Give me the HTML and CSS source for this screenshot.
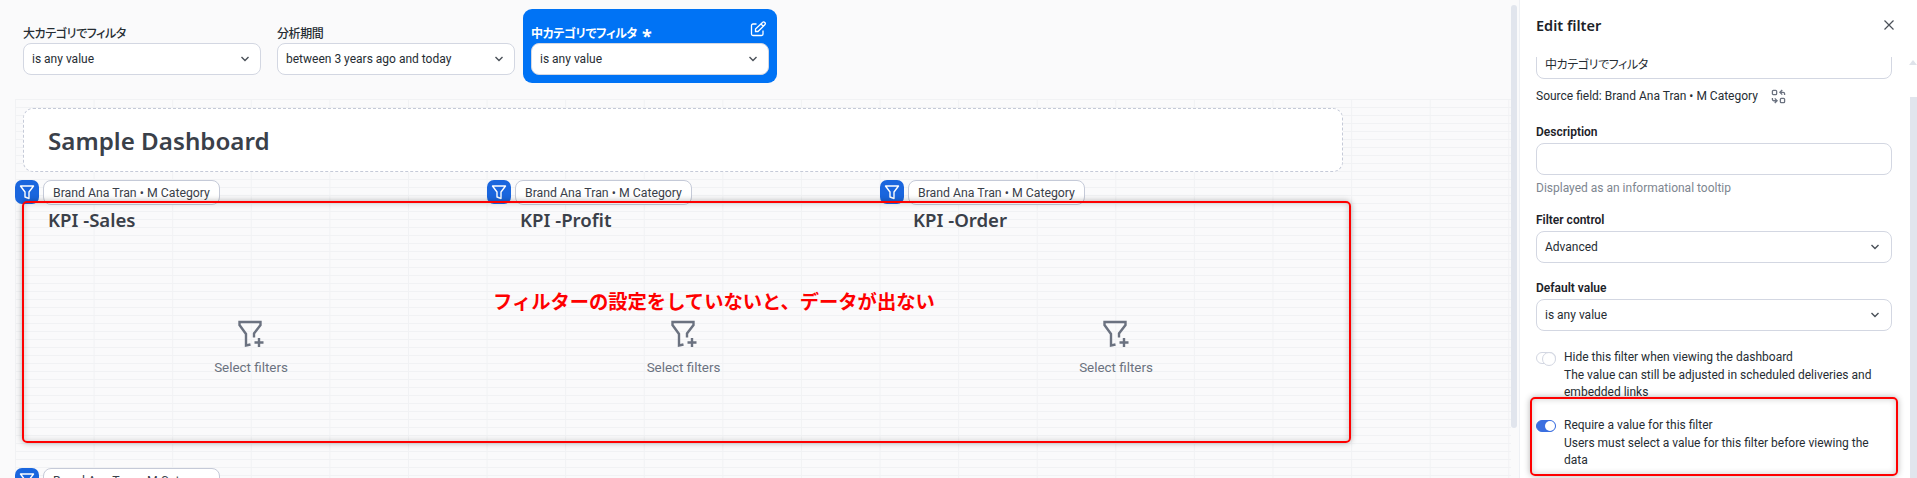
FILE: index.html
```html
<!DOCTYPE html>
<html lang="en">
<head>
    <meta charset="UTF-8">
    <meta name="viewport" content="width=device-width, initial-scale=1.0">
    <title>Sample Dashboard</title>
    <link rel="stylesheet" href="styles.css">
</head>
<body>
    <main class="dashboard">
        <!-- Filter bar -->
        <div class="filter-bar">
            <div class="filter">
                <div class="filter-label">大カテゴリでフィルタ</div>
                <div class="select">is any value<svg class="chevron" viewBox="0 0 10 6"><path d="M1.500 1l3.500 3.500L8.500 1"/></svg></div>
            </div>
            <div class="filter">
                <div class="filter-label">分析期間</div>
                <div class="select">between 3 years ago and today<svg class="chevron" viewBox="0 0 10 6"><path d="M1.500 1l3.500 3.500L8.500 1"/></svg></div>
            </div>
            <div class="filter filter-active">
                <div class="filter-label">
                    <span>中カテゴリでフィルタ<b class="required">*</b></span>
                    <svg class="edit-icon" viewBox="0 0 16 16"><path d="M6.500 3H3a1.500 1.500 0 0 0-1.500 1.500V13A1.500 1.500 0 0 0 3 14.500h8.500A1.500 1.500 0 0 0 13 13V9.500"/><path d="M5.500 10.500V8l7-6.500a1.400 1.400 0 0 1 2.300 2.300L8 10.500zM11 3l2.300 2.300"/></svg>
                </div>
                <div class="select">is any value<svg class="chevron" viewBox="0 0 10 6"><path d="M1.500 1l3.500 3.500L8.500 1"/></svg></div>
            </div>
        </div>

        <!-- Tile canvas -->
        <div class="canvas">
            <div class="title-tile"><h1>Sample Dashboard</h1></div>

            <div class="tile-row">
                <section class="tile tile-wide">
                    <div class="tile-filter">
                        <span class="badge"><svg viewBox="0 0 16 16"><path d="M1.500 2h13L10 8v6.500l-4-1.500V8z"/></svg></span>
                        <span class="chip">Brand Ana Tran • M Category</span>
                    </div>
                    <h2>KPI -Sales</h2>
                    <div class="empty">
                        <svg viewBox="0 0 26 28"><path d="M12.500 24.500L8 25.500V14L1.500 5V2h21v3L16 13.500V17.500"/><path d="M21 18v9M16.500 22.500h9"/></svg>
                        <p>Select filters</p>
                    </div>
                </section>
                <section class="tile tile-narrow">
                    <div class="tile-filter">
                        <span class="badge"><svg viewBox="0 0 16 16"><path d="M1.500 2h13L10 8v6.500l-4-1.500V8z"/></svg></span>
                        <span class="chip">Brand Ana Tran • M Category</span>
                    </div>
                    <h2>KPI -Profit</h2>
                    <div class="empty">
                        <svg viewBox="0 0 26 28"><path d="M12.500 24.500L8 25.500V14L1.500 5V2h21v3L16 13.500V17.500"/><path d="M21 18v9M16.500 22.500h9"/></svg>
                        <p>Select filters</p>
                    </div>
                </section>
                <section class="tile tile-wide">
                    <div class="tile-filter">
                        <span class="badge"><svg viewBox="0 0 16 16"><path d="M1.500 2h13L10 8v6.500l-4-1.500V8z"/></svg></span>
                        <span class="chip">Brand Ana Tran • M Category</span>
                    </div>
                    <h2>KPI -Order</h2>
                    <div class="empty">
                        <svg viewBox="0 0 26 28"><path d="M12.500 24.500L8 25.500V14L1.500 5V2h21v3L16 13.500V17.500"/><path d="M21 18v9M16.500 22.500h9"/></svg>
                        <p>Select filters</p>
                    </div>
                </section>
            </div>

            <div class="tile-filter">
                <span class="badge"><svg viewBox="0 0 16 16"><path d="M1.500 2h13L10 8v6.500l-4-1.500V8z"/></svg></span>
                <span class="chip">Brand Ana Tran • M Category</span>
            </div>
        </div>

        <!-- Red annotation drawn over the screenshot -->
        <div class="note-box note-tiles"></div>
        <div class="note-text">フィルターの設定をしていないと、データが出ない</div>
    </main>

    <div class="page-scrollbar"></div>

    <!-- Edit filter panel -->
    <aside class="panel">
        <header class="panel-header">
            <h3>Edit filter</h3>
            <svg class="close-icon" viewBox="0 0 12 12"><path d="M1.500 1.500l9 9M10.500 1.500l-9 9"/></svg>
        </header>
        <div class="panel-body">
            <div class="input input-cut">中カテゴリでフィルタ</div>
            <div class="source-row">
                <span>Source field: Brand Ana Tran • M Category</span>
                <svg class="swap-icon" viewBox="0 0 16 16"><rect x="1.500" y="1.500" width="4.500" height="4.500" rx="1"/><rect x="10" y="10" width="4.500" height="4.500" rx="1"/><path d="M9.500 3.500h3.500a1.500 1.500 0 0 1 1.500 1.500v1.500M12 1l-2.500 2.500L12 6"/><path d="M6.500 12.500H3A1.500 1.500 0 0 1 1.500 11V9.500M4 15l2.500-2.500L4 10"/></svg>
            </div>

            <div class="field-label label-description">Description</div>
            <div class="input"></div>
            <div class="hint">Displayed as an informational tooltip</div>

            <div class="field-label label-control">Filter control</div>
            <div class="input">Advanced<svg class="chevron" viewBox="0 0 10 6"><path d="M1.500 1l3.500 3.500L8.500 1"/></svg></div>

            <div class="field-label label-default">Default value</div>
            <div class="input">is any value<svg class="chevron" viewBox="0 0 10 6"><path d="M1.500 1l3.500 3.500L8.500 1"/></svg></div>

            <div class="toggle-row toggle-hide">
                <span class="toggle"></span>
                <div>
                    <div class="toggle-title">Hide this filter when viewing the dashboard</div>
                    <div class="toggle-text">The value can still be adjusted in scheduled deliveries and embedded links</div>
                </div>
            </div>
            <div class="toggle-row toggle-require">
                <span class="toggle toggle-on"></span>
                <div>
                    <div class="toggle-title">Require a value for this filter</div>
                    <div class="toggle-text">Users must select a value for this filter before viewing the data</div>
                </div>
            </div>
        </div>
        <div class="panel-scroll-arrow"></div>
        <div class="panel-scrollbar"></div>
    </aside>
    <div class="note-box note-panel"></div>
</body>
</html>
```

FILE: styles.css
```css
/* General Styles */
* {
    box-sizing: border-box;
}

html, body {
    height: 478px;
}

body {
    margin: 0;
    display: flex;
    overflow: hidden;
    font-family: Roboto, "Noto Sans CJK JP", sans-serif;
    font-size: 12px;
    color: #262d33;
    background-color: #fafafb;
}

.chevron {
    width: 10px;
    height: 6px;
    fill: none;
    stroke: #4a5058;
    stroke-width: 1.400;
    flex-shrink: 0;
}

/* Dashboard */
.dashboard {
    position: relative;
    width: 1511px;
    flex-shrink: 0;
}

.filter-bar {
    display: flex;
    align-items: flex-end;
    gap: 16px;
    height: 99px;
    padding: 9px 0 16px 23px;
}

.filter {
    width: 238px;
    margin-bottom: 8px;
}

.filter-label {
    height: 20px;
    font-family: "Noto Sans CJK JP", sans-serif;
    font-size: 12px;
    font-weight: 500;
    font-feature-settings: "palt";
    line-height: 20px;
    letter-spacing: -0.400px;
}

.select {
    display: flex;
    justify-content: space-between;
    align-items: center;
    height: 32px;
    padding: 0 10px 0 8px;
    background-color: #fff;
    border: 1px solid #d3d7e2;
    border-radius: 8px;
}

.filter-active {
    width: 254px;
    margin: 0 0 0 -8px;
    padding: 8px;
    color: #fff;
    background-color: #0073f5;
    border-radius: 9px;
}

.filter-active .select {
    color: #262d33;
}

.filter-active .filter-label {
    display: flex;
    justify-content: space-between;
    height: 26px;
    font-weight: 600;
    line-height: 32px;
}

.required {
    margin-left: 5px;
    font-family: "Noto Sans", sans-serif;
    font-size: 18px;
    font-weight: 700;
    line-height: 0;
    vertical-align: -5px;
}

.edit-icon {
    width: 16px;
    height: 16px;
    margin: 4px 3px 0 0;
    fill: none;
    stroke: #fff;
    stroke-width: 1.300;
}

/* Canvas */
.canvas {
    height: 379px;
    margin-left: 15px;
    padding-top: 9px;
    background-color: #fafafb;
    background-image:
        linear-gradient(to bottom, #f1f2f4 1px, transparent 1px),
        linear-gradient(to right, #f1f2f4 1px, transparent 1px);
    background-size: 100% 8px, 78.600px 100%;
}

.title-tile {
    display: flex;
    align-items: center;
    width: 1320px;
    height: 64px;
    margin-left: 8px;
    padding-left: 24px;
    background-color: #fff;
    border: 1px dashed #c5cad8;
    border-radius: 10px;
}

h1 {
    margin: 0;
    font-family: "Noto Sans", sans-serif;
    font-size: 24.200px;
    font-weight: 600;
    color: #3a4049;
}

.tile-row {
    display: flex;
    height: 288px;
    margin-top: 8px;
}

.tile-wide {
    width: 472px;
}

.tile-narrow {
    width: 393px;
}

.tile-filter {
    display: flex;
    gap: 4px;
    height: 25px;
}

.badge {
    display: flex;
    justify-content: center;
    align-items: center;
    width: 24px;
    height: 24px;
    background-color: #1a66de;
    border-radius: 7px;
}

.badge svg {
    width: 16px;
    height: 16px;
    fill: none;
    stroke: #fff;
    stroke-width: 1.400;
    stroke-linejoin: round;
}

.chip {
    width: 177px;
    height: 25px;
    padding: 0 9px;
    font-size: 12.300px;
    line-height: 25px;
    white-space: nowrap;
    color: #3a4049;
    background-color: #fff;
    border: 1px solid #c5cad8;
    border-radius: 8px;
}

h2 {
    margin: 3px 0 0 33px;
    font-family: "Noto Sans", sans-serif;
    font-size: 18.600px;
    font-weight: 600;
    line-height: 24px;
    color: #3a4049;
}

.empty {
    display: flex;
    flex-direction: column;
    align-items: center;
    margin-top: 88px;
}

.empty svg {
    width: 26px;
    height: 28px;
    fill: none;
    stroke: #6b7280;
    stroke-width: 2.400;
}

.empty p {
    margin: 11px 0 0;
    font-size: 13.400px;
    line-height: 18px;
    color: #6b7280;
}

/* Red annotation */
.note-box {
    position: absolute;
    border: 2px solid #fe0000;
    border-radius: 5px;
    box-shadow: 0 0 6px rgba(0, 0, 0, 0.300), inset 0 0 6px rgba(0, 0, 0, 0.200);
}

.note-tiles {
    left: 22px;
    top: 201px;
    width: 1329px;
    height: 242px;
}

.note-panel {
    left: 1530px;
    top: 397px;
    width: 368px;
    height: 79px;
}

.note-text {
    position: absolute;
    left: 493px;
    top: 288px;
    font-family: "Noto Sans CJK JP", sans-serif;
    font-size: 19.300px;
    font-weight: 700;
    line-height: 26px;
    color: #fe0000;
}

/* Scrollbars */
.page-scrollbar {
    width: 6px;
    height: 423px;
    margin-top: 5px;
    flex-shrink: 0;
    background-color: #e1e5ed;
    border-radius: 3px;
}

/* Edit filter panel */
.panel {
    position: relative;
    width: 398px;
    margin-left: 2px;
    flex-shrink: 0;
    background-color: #fff;
    border-left: 1px solid #eef0f4;
}

.panel-header {
    display: flex;
    justify-content: space-between;
    align-items: center;
    height: 57px;
    padding: 0 22px 7px 16px;
}

h3 {
    margin: 0;
    font-family: "Noto Sans", sans-serif;
    font-size: 14.500px;
    font-weight: 600;
    color: #1c2228;
}

.close-icon {
    width: 12px;
    height: 12px;
    fill: none;
    stroke: #4a5058;
    stroke-width: 1.200;
}

.panel-body {
    height: 421px;
    padding: 0 25px 0 16px;
    overflow: hidden;
}

.input {
    display: flex;
    justify-content: space-between;
    align-items: center;
    height: 32px;
    padding: 0 11px 0 8px;
    background-color: #fff;
    border: 1px solid #d3d7e2;
    border-radius: 8px;
}

.input-cut {
    align-items: flex-end;
    margin-top: -10px;
    padding-bottom: 6px;
    font-family: "Noto Sans CJK JP", sans-serif;
    font-feature-settings: "palt";
    letter-spacing: -0.400px;
}

.source-row {
    display: flex;
    align-items: center;
    gap: 13px;
    height: 18px;
    margin-top: 8px;
}

.swap-icon {
    width: 15px;
    height: 15px;
    fill: none;
    stroke: #6b7280;
    stroke-width: 1.400;
}

.field-label {
    height: 18px;
    margin-bottom: 2px;
    font-weight: 600;
    line-height: 18px;
    color: #1c2228;
}

.label-description {
    margin-top: 18px;
}

.label-control {
    margin-top: 14px;
}

.label-default {
    margin-top: 16px;
}

.hint {
    height: 18px;
    margin-top: 4px;
    line-height: 18px;
    color: #7e8690;
}

/* Toggles */
.toggle-row {
    display: flex;
    gap: 8px;
    line-height: 17px;
}

.toggle-hide {
    margin-top: 18px;
}

.toggle-require {
    margin-top: 16px;
}

.toggle-title {
    margin-bottom: 1px;
}

.toggle {
    position: relative;
    width: 20px;
    height: 12px;
    margin-top: 3px;
    flex-shrink: 0;
    background-color: #fff;
    border: 1px solid #d3d7e2;
    border-radius: 6px;
}

.toggle::after {
    content: "";
    position: absolute;
    right: -1px;
    top: -1px;
    width: 12px;
    height: 12px;
    background-color: #fff;
    border: 1px solid #d3d7e2;
    border-radius: 50%;
}

.toggle-on {
    background-color: #3b6fe0;
    border-color: #3b6fe0;
}

.toggle-on::after {
    right: 0;
    top: 0;
    width: 10px;
    height: 10px;
    border: none;
}

.panel-scroll-arrow {
    position: absolute;
    right: 0;
    top: 60px;
    border-left: 4px solid transparent;
    border-right: 4px solid transparent;
    border-bottom: 5px solid #dfe3ea;
}

.panel-scrollbar {
    position: absolute;
    right: 0;
    top: 97px;
    bottom: 0;
    width: 7px;
    background-color: #e1e5ed;
}
```
